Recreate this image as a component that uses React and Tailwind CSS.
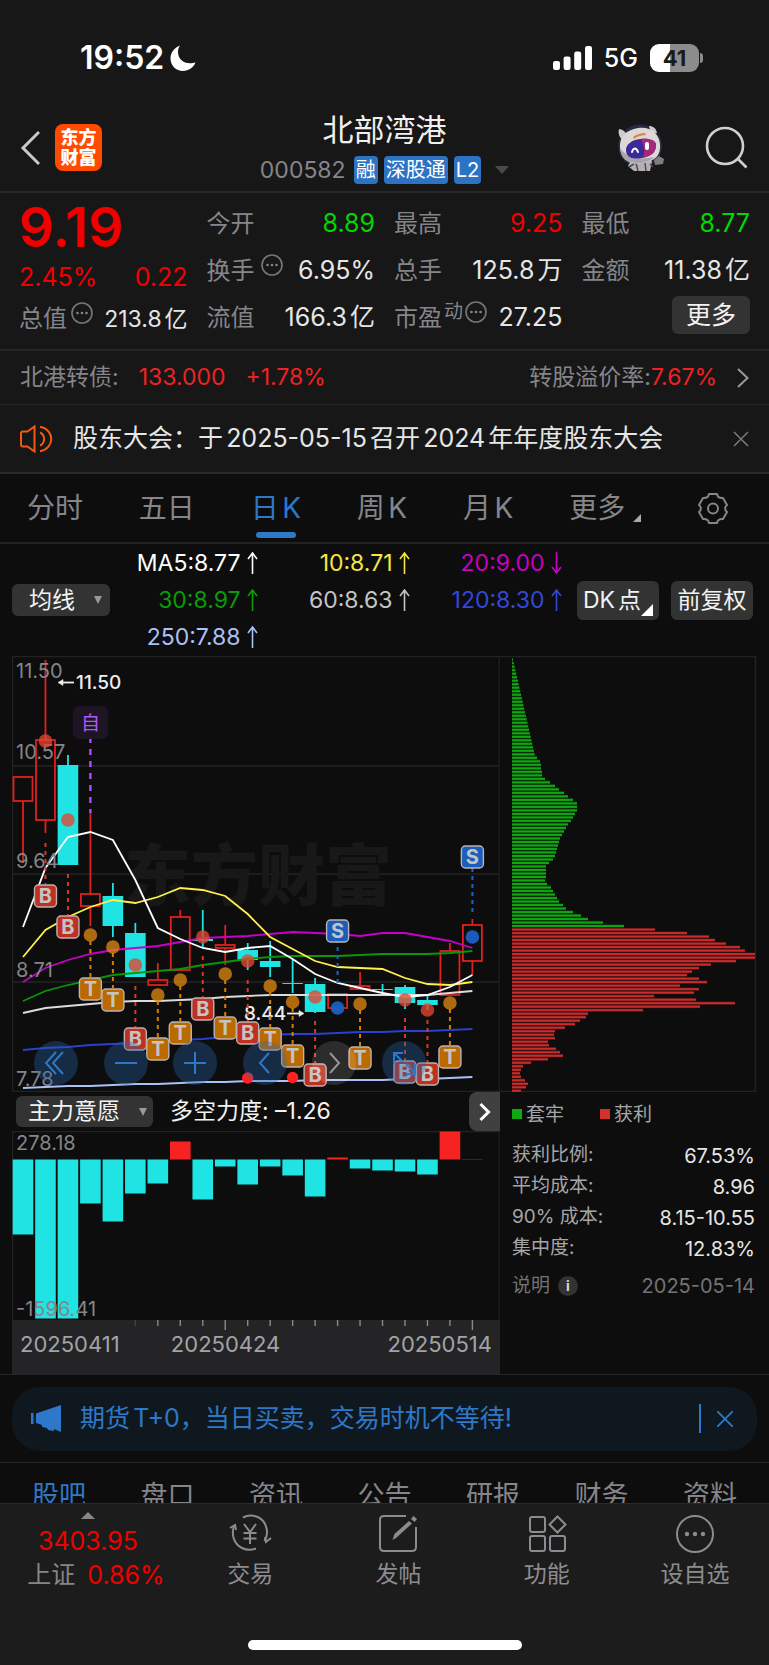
import React, { useState } from 'react'

const STEP = 22.47
const cx = (i) => 23 + STEP * i

const RED = '#e01f1f'
const CYAN = '#20e3e3'

// [high, top, bottom, low, type]
const candles = [
  [777, 777, 801, 863, 'up'],
  [660, 740, 820, 833, 'up'],
  [755, 765, 865, 865, 'down'],
  [813, 894, 906, 926, 'up'],
  [883, 896, 926, 937, 'down'],
  [923, 933, 977, 977, 'down'],
  [963, 980, 985, 985, 'up'],
  [910, 917, 970, 970, 'up'],
  [910, 939, 941, 947, 'down'],
  [925, 945, 948, 965, 'up'],
  [943, 950, 960, 970, 'down'],
  [941, 961, 967, 977, 'down'],
  [959, 983, 984, 993, 'down'],
  [978, 984, 1012, 1013, 'down'],
  [994, 994, 1008, 1012, 'up'],
  [972, 986, 989, 989, 'up'],
  [984, 989, 990, 995, 'down'],
  [985, 987, 1003, 1009, 'down'],
  [996, 1000, 1005, 1010, 'down'],
  [943, 951, 995, 995, 'up'],
  [919, 925, 961, 975, 'up'],
]

const maLines = [
  { color: '#dcdcdc', v: [1013, 1008, 1006, 1004, 1002, 1001, 1001, 1000, 999, 997, 996, 995, 995, 995, 995, 995, 995, 995, 995, 993, 991] },
  { color: '#2b3fd0', v: [1050, 1048, 1047, 1045, 1044, 1043, 1041, 1040, 1039, 1037, 1036, 1035, 1034, 1034, 1033, 1032, 1032, 1031, 1031, 1030, 1029] },
  { color: '#a9c1f7', v: [1088, 1087, 1086, 1086, 1085, 1084, 1084, 1083, 1082, 1082, 1081, 1081, 1081, 1080, 1080, 1080, 1080, 1079, 1079, 1078, 1077] },
  { color: '#0a950a', v: [1001, 991, 985, 980, 975, 973, 971, 969, 965, 962, 959, 957, 956, 956, 956, 955, 954, 954, 954, 953, 951] },
  { color: '#c800c8', v: [982, 968, 960, 954, 950, 948, 946, 942, 938, 937, 936, 934, 932, 933, 934, 936, 933, 933, 937, 941, 948] },
  { color: '#fff04a', v: [957, 930, 917, 907, 900, 903, 897, 888, 890, 896, 914, 937, 949, 961, 967, 968, 969, 978, 984, 985, 982] },
  { color: '#ffffff', v: [927, 868, 837, 832, 840, 880, 928, 939, 948, 952, 948, 946, 959, 974, 983, 988, 993, 997, 995, 987, 975] },
]

// trade marks: index, letter, dot y, badge y, dashed line start
const marks = [
  [1, 'B', 741, 896, 843],
  [2, 'B', 820, 927, 874],
  [3, 'T', 935, 989, 941],
  [4, 'T', 947, 1000, 953],
  [5, 'B', 965, 1039, 986],
  [6, 'T', 995, 1049, 1001],
  [7, 'T', 980, 1033, 986],
  [8, 'B', 937, 1009, 956],
  [9, 'T', 974, 1028, 980],
  [10, 'B', 961, 1033, 980],
  [11, 'T', 986, 1039, 992],
  [12, 'T', 1002, 1056, 1008],
  [14, 'S', 1008, 931, 983],
  [15, 'T', 1004, 1058, 1010],
  [17, 'B', 1000, 1072, 1018],
  [18, 'B', 1010, 1074, 1020],
  [13, 'B', 997, 1075, 1021],
  [19, 'T', 1003, 1057, 1009],
  [20, 'S', 937, 857, 912],
]
const markColors = {
  B: { badge: '#bf3022', dot: '#e2452f', line: '#d23a2a' },
  T: { badge: '#bb6a00', dot: '#dd8511', line: '#d87f0a' },
  S: { badge: '#1a5dbd', dot: '#1c5fc4', line: '#1d64cc' },
}

const greenBars = [
  ...Array.from({ length: 28 }, (_, i) => 1 + i * 0.8),
  25, 28, 29, 29, 30, 30, 33, 38, 43, 47, 52, 56, 61, 65, 65, 65, 63, 61, 59, 56, 54, 52, 50, 48,
  47, 46, 45, 44, 43, 41, 37, 34, 34, 34, 34, 33, 35, 39, 41, 43, 45, 47, 51, 54, 61, 69, 76, 91, 112,
]
const redBars = [
  143, 175, 197, 203, 214, 228, 233, 243, 243, 224, 199, 187, 180, 175, 187, 195, 168, 187, 182, 142,
  184, 223, 188, 131, 76, 74, 68, 63, 53, 43, 42, 43, 36, 37, 44, 48, 51, 36, 19, 11, 9, 8, 9, 13, 16, 14, 9,
]

const forceBars = [75, 159, 159, 44, 62, 34, 24, -18, 40, 7, 25, 7, 16, 37, -2, 9, 11, 12, 15, -28, 0]

const maValues = [
  ['MA5:8.77', 'up', 'text-white'],
  ['10:8.71', 'up', 'text-[#f5e642]'],
  ['20:9.00', 'down', 'text-[#c800c0]'],
  ['30:8.97', 'up', 'text-[#0a9a0a]'],
  ['60:8.63', 'up', 'text-[#c4c4c4]'],
  ['120:8.30', 'up', 'text-[#3348d8]'],
  ['250:7.88', 'up', 'text-[#a9c1f7]'],
]

const costRows = [
  ['获利比例:', '67.53%'],
  ['平均成本:', '8.96'],
  ['90% 成本:', '8.15-10.55'],
  ['集中度:', '12.83%'],
]

function DotsIcon() {
  return (
    <svg className="w-[22px] h-[22px] shrink-0" viewBox="0 0 22 22" fill="none">
      <circle cx="11" cy="11" r="10" stroke="#77777b" strokeWidth="1.6" />
      <circle cx="6.5" cy="11" r="1.3" fill="#85858a" />
      <circle cx="11" cy="11" r="1.3" fill="#85858a" />
      <circle cx="15.5" cy="11" r="1.3" fill="#85858a" />
    </svg>
  )
}

function MaArrow({ dir }) {
  return (
    <svg className="w-[11px] h-[22px]" viewBox="0 0 11 22" fill="none" stroke="currentColor" strokeWidth="1.6">
      {dir === 'up' ? <path d="M5.5 22V1M1 7l4.5-6L10 7" /> : <path d="M5.5 0v21M1 15l4.5 6 4.5-6" />}
    </svg>
  )
}

function StatusBar() {
  return (
    <div className="h-[116px] pl-20 pr-[66px] flex items-center justify-between text-white">
      <div className="flex items-center gap-1.5">
        <span className="text-[32px] font-semibold leading-none">19:52</span>
        <svg className="w-[26px] h-[26px]" viewBox="0 0 26 26" fill="#fff">
          <path d="M10 0.500C4.500 2.500 0.500 7.500 0.500 13.500C0.500 20.500 6 26 13 26C18.800 26 23.700 22.600 25.500 17.300C24 18 22 18.300 20 18.300C13 18.300 8 13.500 8 7C8 4.500 8.700 2.300 10 0.500Z" />
        </svg>
      </div>
      <div className="flex items-center gap-3">
        <svg className="w-[39px] h-[24px]" viewBox="0 0 39 24" fill="#fff">
          <rect x="0" y="15" width="7" height="9" rx="2.200" />
          <rect x="10.600" y="10.500" width="7" height="13.500" rx="2.200" />
          <rect x="21.200" y="5.500" width="7" height="18.500" rx="2.200" />
          <rect x="32" y="0" width="7" height="24" rx="2.200" />
        </svg>
        <span className="text-[25px] leading-none font-medium">5G</span>
        <div className="flex items-center gap-px">
          <div className="w-[49px] h-[28px] rounded-[9px] bg-linear-to-r from-white from-41% to-[#8c8c8c] to-41% flex items-center justify-center">
            <span className="text-[22px] font-bold leading-none text-[#1a1a1a]">41</span>
          </div>
          <div className="w-[3px] h-2.5 rounded-r-full bg-[#8c8c8c]" />
        </div>
      </div>
    </div>
  )
}

function Robot() {
  return (
    <svg className="w-[48px] h-[48px]" viewBox="0 0 48 48">
      <ellipse cx="23" cy="22" rx="22" ry="21.500" fill="#252c42" />
      <path d="M2 5c3 0 6 2 8 6l-5 4c-3-2-4-6-3-10zM32 2c4 0 7 2 8 7l-6 1z" fill="#cfcaca" />
      <path d="M14 36l-3 6 6 5h16l2-10-8-4z" fill="#b5b1b3" />
      <path d="M19 39l2 8M28 39l1 8M12 43l5-3M33 40l3 3" stroke="#4f4b52" strokeWidth="1.500" fill="none" />
      <path d="M3 24C2 13 9 6 21 4s21 5 22 16-4 17-18 19S4 35 3 24z" fill="#ddd7d6" />
      <path d="M3 24c1 10 7 15 18 15 7 0 12-2 16-6-12 3-27 2-34-9z" fill="#a9a4a9" />
      <path d="M16 13c4-3 8-4 12-4l1 2c-4 0-8 1-12 4z" fill="#d98450" />
      <path d="M9 26c0-6 6-10 14-11s16 1 16 6-2 11-14 13S9 32 9 26z" fill="#3b2a9a" />
      <path d="M24 15c8-1 15 1 15 6s-2 11-14 13c4-5 2-11-1-19z" fill="#a32a78" />
      <path d="M15 28c1-4 4-5 6 0" stroke="#fff" strokeWidth="2" fill="none" strokeLinecap="round" />
      <path d="M30 20v4" stroke="#fff" strokeWidth="4" strokeLinecap="round" />
      <path d="M37 36l5-4 5 3-1 5-8 1z" fill="#807d82" />
    </svg>
  )
}

function Header() {
  return (
    <header className="h-[77px] border-b-2 border-[#262626] px-5 pb-3 flex items-center justify-between">
      <div className="flex-1 flex items-center gap-[15px]">
        <button aria-label="返回">
          <svg className="w-5 h-9" viewBox="0 0 20 36" fill="none" stroke="#c9c9c9" strokeWidth="3">
            <path d="M19 2L3 18l16 16" />
          </svg>
        </button>
        <div className="w-[47px] h-[47px] rounded-lg bg-[#ff4a00] text-white text-[18px] leading-5 font-black flex flex-col items-center justify-center">
          <span>东方</span>
          <span>财富</span>
        </div>
      </div>
      <div className="flex flex-col items-center">
        <h1 className="text-[31px] leading-9 text-[#f0f0f0]">北部湾港</h1>
        <div className="flex items-center gap-1.5 mt-2 text-xl leading-7 text-white">
          <span className="text-[23px] text-[#85858a] mr-0.5">000582</span>
          <span className="bg-[#2d73c4] rounded px-0.5">融</span>
          <span className="bg-[#2d73c4] rounded px-0.5">深股通</span>
          <span className="bg-[#2d73c4] rounded px-0.5">L2</span>
          <span className="ml-2 border-x-[7px] border-x-transparent border-t-8 border-t-[#4a4a4a]" />
        </div>
      </div>
      <div className="flex-1 flex items-center justify-end gap-10">
        <Robot />
        <button aria-label="搜索">
          <svg className="w-[44px] h-[44px]" viewBox="0 0 44 44" fill="none" stroke="#d0d0d0" strokeWidth="2.600">
            <circle cx="20" cy="20" r="18" />
            <path d="M32.500 32.500l9 9" />
          </svg>
        </button>
      </div>
    </header>
  )
}

function Cell({ label, extra, value, color = 'text-[#e6e6e6]' }) {
  return (
    <div className="h-[47px] flex items-center justify-between">
      <div className="flex items-center text-2xl leading-none text-[#85858a]">
        <span>{label}</span>
        {extra}
      </div>
      <span className={color}>{value}</span>
    </div>
  )
}

function Quote() {
  return (
    <section className="h-[158px] border-b-2 border-[#262626] pt-[7px] px-[19px] grid grid-cols-4 gap-x-[19px] text-[25px] leading-none whitespace-nowrap [text-autospace:normal]">
      <div>
        <div className="h-[54px] flex items-center text-[55px] font-semibold text-[#f00000]">9.19</div>
        <div className="h-[47px] flex items-center justify-between text-[#f00000]">
          <span>2.45%</span>
          <span>0.22</span>
        </div>
        <div className="h-9 flex items-center justify-between">
          <div className="flex items-center gap-1 text-2xl leading-none text-[#85858a]">
            <span>总值</span>
            <div className="pb-3"><DotsIcon /></div>
          </div>
          <span className="text-[23px] text-[#e6e6e6]">213.8亿</span>
        </div>
      </div>
      <div>
        <Cell label="今开" value="8.89" color="text-[#00d900]" />
        <Cell label="换手" value="6.95%" extra={<div className="pb-3 pl-1.5"><DotsIcon /></div>} />
        <Cell label="流值" value="166.3亿" />
      </div>
      <div>
        <Cell label="最高" value="9.25" color="text-[#f00000]" />
        <Cell label="总手" value="125.8万" />
        <Cell
          label="市盈"
          value="27.25"
          extra={
            <div className="flex items-center gap-0.5 pb-3 pl-0.5">
              <span className="text-[19px]">动</span>
              <DotsIcon />
            </div>
          }
        />
      </div>
      <div>
        <Cell label="最低" value="8.77" color="text-[#00d900]" />
        <Cell label="金额" value="11.38亿" />
        <div className="h-[47px] pt-0.5 flex items-start justify-end">
          <button className="h-[38px] px-3.5 rounded-md bg-[#333] text-[25px] leading-none text-[#f2f2f2]">更多</button>
        </div>
      </div>
    </section>
  )
}

function Bond() {
  return (
    <section className="h-[54px] border-b border-[#262626] px-5 flex items-center justify-between text-[23px]">
      <div className="flex items-center gap-5 text-[#ee2222]">
        <span className="text-[#85858a]">北港转债:</span>
        <span>133.000</span>
        <span>+1.78%</span>
      </div>
      <button className="flex items-center">
        <span className="text-[#85858a]">转股溢价率:</span>
        <span className="text-[#ee2222]">7.67%</span>
        <svg className="w-3 h-5 ml-5" viewBox="0 0 12 20" fill="none" stroke="#999" strokeWidth="2">
          <path d="M1 1l9.500 9L1 19" />
        </svg>
      </button>
    </section>
  )
}

function Notice() {
  return (
    <section className="h-[69px] border-b-2 border-[#2a2a2a] px-5 flex items-center">
      <svg className="w-[33px] h-[28px]" viewBox="0 0 33 28" fill="none" stroke="#f25a10" strokeWidth="2">
        <path d="M14.500 1.500v25l-7-5H3c-1.200 0-2-.800-2-2V8.500c0-1.200.800-2 2-2h4.500z" />
        <path d="M20 7.500c5.500 2.500 5.500 10.500 0 13" />
        <path d="M20 1.800c15 3 15 21.400 0 24.400" />
      </svg>
      <span className="ml-5 text-[25px] text-[#e6e6e6] [text-autospace:normal] whitespace-nowrap">股东大会：于2025-05-15召开2024年年度股东大会</span>
      <button aria-label="关闭" className="ml-auto">
        <svg className="w-4 h-4" viewBox="0 0 16 16" stroke="#7a7a7a" strokeWidth="1.500">
          <path d="M1 1l14 14M15 1L1 15" />
        </svg>
      </button>
    </section>
  )
}

function PeriodTabs() {
  const [active, setActive] = useState('日K')
  return (
    <nav className="h-[70px] border-b-2 border-[#222] pl-[27px] pr-10 flex items-center justify-between text-[28px] text-[#85858a]">
      {['分时', '五日', '日K', '周K', '月K', '更多'].map((t) => (
        <button
          key={t}
          onClick={() => setActive(t)}
          className={`relative h-full flex items-center [text-autospace:normal] ${active === t ? 'text-[#2d78c8]' : ''}`}
        >
          {t}
          {active === t && <span className="absolute bottom-1 left-1/2 -translate-x-1/2 w-10 h-1.5 rounded-full bg-[#2d78c8]" />}
          {t === '更多' && (
            <svg className="w-2 h-2 ml-2 mt-5" viewBox="0 0 8 8" fill="#aaa"><path d="M8 0v8H0z" /></svg>
          )}
        </button>
      ))}
      <button aria-label="设置">
        <svg className="w-8 h-8" viewBox="0 0 32 32" fill="none" stroke="#85858a" strokeWidth="2" strokeLinejoin="round">
          <path d="M12 2h8c.500 3 2.500 4.300 6 4l4 7c-2.500 2-2.500 5 0 7l-4 7c-3.500-.300-5.500 1-6 4h-8c-.500-3-2.500-4.300-6-4l-4-7c2.500-2 2.500-5 0-7l4-7c3.500.300 5.500-1 6-4z" />
          <circle cx="16" cy="16.500" r="5" />
        </svg>
      </button>
    </nav>
  )
}

function MaBar() {
  return (
    <section className="h-28 px-3 flex items-center justify-between text-[23px] leading-none whitespace-nowrap">
      <div className="relative w-[98px]">
        <select aria-label="均线" className="appearance-none w-full h-8 pl-[17px] rounded-md bg-[#333] leading-8 text-[#f2f2f2]">
          <option>均线</option>
        </select>
        <span className="absolute right-2 top-3 border-x-[4px] border-x-transparent border-t-8 border-t-[#999] pointer-events-none" />
      </div>
      <div className="grid grid-cols-[repeat(3,152px)] w-[456px] -ml-5">
        {maValues.map(([text, dir, color]) => (
          <div key={text} className={`h-[37px] flex items-center justify-end gap-1.5 ${color}`}>
            <span>{text}</span>
            <MaArrow dir={dir} />
          </div>
        ))}
      </div>
      <div className="flex gap-3 pr-1 text-[#f2f2f2]">
        <button className="relative w-[82px] h-[39px] pl-1.5 rounded-md bg-[#333] text-left [text-autospace:normal]">
          DK点
          <svg className="absolute right-1.5 bottom-1 w-3 h-3" viewBox="0 0 12 12" fill="#fff"><path d="M12 0v12H0z" /></svg>
        </button>
        <button className="w-[82px] h-[39px] rounded-md bg-[#333]">前复权</button>
      </div>
    </section>
  )
}

function KLineChart() {
  return (
    <svg className="block w-full" viewBox="12 656 488 436" fontFamily="Inter, 'Noto Sans CJK SC', sans-serif">
      <path d="M12 656.500h488M12 766h488M12 874h488M12 982h488M12 1091.500h488" stroke="#232323" strokeWidth="1.500" />
      <path d="M12.500 656v436" stroke="#232323" strokeWidth="1.500" />
      <path d="M499.500 656v436" stroke="#1c1c1c" strokeWidth="2" />
      <text x="124" y="900" fontSize="67" fontWeight="900" fill="#181818">东方财富</text>

      {candles.map(([high, top, bottom, low, type], i) => {
        const x = cx(i)
        return type === 'up' ? (
          <g key={i} stroke={RED} strokeWidth="1.800" fill="none">
            <path d={`M${x} ${high}V${top}M${x} ${bottom}V${low}`} />
            <rect x={x - 9.5} y={top} width="19" height={bottom - top} />
          </g>
        ) : (
          <g key={i} fill={CYAN}>
            <path d={`M${x} ${high}V${low}`} stroke={CYAN} strokeWidth="1.800" />
            <rect x={x - 10.3} y={top} width="20.600" height={bottom - top} />
          </g>
        )
      })}

      {maLines.map((line) => (
        <polyline
          key={line.color}
          points={line.v.map((y, i) => `${cx(i)},${y}`).join(' ')}
          fill="none"
          stroke={line.color}
          strokeWidth="1.800"
        />
      ))}

      <g fontSize="20" fill="#85858a">
        <text x="16" y="678">11.50</text>
        <text x="16" y="759">10.57</text>
        <text x="16" y="868">9.64</text>
        <text x="16" y="977">8.71</text>
        <text x="16" y="1086">7.78</text>
      </g>

      <path d="M90.400 739V813" stroke="#a94dff" strokeWidth="2.400" strokeDasharray="6 6" strokeDashoffset="2" />
      <rect x="73" y="706" width="35" height="33" rx="6" fill="#1d1424" />
      <text x="90.500" y="730" fontSize="19" fill="#b055ff" textAnchor="middle">自</text>

      <g fontSize="19" fontWeight="500" fill="#ededed" stroke="none">
        <text x="76" y="689">11.50</text>
        <text x="244" y="1020">8.44</text>
      </g>
      <g stroke="#ededed" strokeWidth="1.800" fill="#ededed">
        <path d="M62 682.500H74" />
        <path d="M58 682.500l5-3v6z" strokeWidth="0.500" />
        <path d="M287 1013.500H300" />
        <path d="M304 1013.500l-5-3v6z" strokeWidth="0.500" />
      </g>

      {marks.map(([i, letter, dotY, badgeY, lineY]) => {
        const x = cx(i)
        const c = markColors[letter]
        const end = letter === 'S' ? badgeY + 11 : badgeY - 12
        return (
          <g key={i}>
            <path d={`M${x} ${lineY}V${end}`} stroke={c.line} strokeWidth="2" strokeDasharray="4 4" />
            <circle cx={x} cy={dotY} r="6.800" fill={c.dot} fillOpacity={letter === 'S' ? 0.95 : 0.78} />
            <rect x={x - 11} y={badgeY - 11} width="22" height="22" rx="4" fill={c.badge} stroke="#bdb3b0" strokeWidth="1.400" />
            <text x={x} y={badgeY + 7} fontSize="20" fontWeight="700" fill="#c4c4c4" textAnchor="middle">{letter}</text>
          </g>
        )
      })}
      <circle cx="247.700" cy="1078" r="5.700" fill="#ff2222" />
      <circle cx="292.600" cy="1077.500" r="5.700" fill="#ff2222" />
    </svg>
  )
}

function ChartControls() {
  const controls = [
    ['向前翻页', <path key="p" d="M22 11L12 22l10 11M29 11L19 22l10 11" />],
    ['缩小', <path key="p" d="M11 22h22" />],
    ['放大', <path key="p" d="M11 22h22M22 11v22" />],
    ['左移', <path key="p" d="M26 12L17 22l9 10" />],
    ['右移', <path key="p" d="M18 12l9 10-9 10" />],
    ['全屏', <path key="p" d="M12 22V12h9M12 12l9 9M24 23l9 9M33 23v10h-9" />],
  ]
  return (
    <div className="absolute left-[22px] right-[74px] bottom-[7px] flex justify-between">
      {controls.map(([label, icon]) => (
        <button
          key={label}
          aria-label={label}
          className={`w-11 h-11 rounded-full ${label === '右移' ? 'bg-white/13' : 'bg-[#2766ae]/35'}`}
        >
          <svg viewBox="0 0 44 44" fill="none" stroke={label === '右移' ? '#97979b' : '#2d78c8'} strokeWidth="2">
            {icon}
          </svg>
        </button>
      ))}
    </div>
  )
}

function CostChart() {
  return (
    <svg className="block w-full" viewBox="500 656 257 436">
      <path d="M500 656.500h256M755.500 656v436M500 1091.500h256" stroke="#232323" strokeWidth="1.500" fill="none" />
      {[...greenBars, ...redBars].map((w, i) => (
        <g key={i} fill={i < greenBars.length ? '#10a810' : '#cc2c2c'}>
          <rect x="512" y={658.7 + i * 3.505} width={w} height="2" />
          <rect x="512" y={658 + i * 3.505} width={w} height="3.200" opacity="0.300" />
        </g>
      ))}
    </svg>
  )
}

function ForceChart() {
  return (
    <svg className="block w-full" viewBox="12 1131 488 189" fontFamily="Inter, sans-serif">
      <path d="M12 1131.500h488M12.500 1131v189" stroke="#232323" strokeWidth="1.500" />
      <path d="M499.500 1131v189" stroke="#1c1c1c" strokeWidth="2" />
      {forceBars.map((v, i) => (
        <rect
          key={i}
          x={cx(i) - 10.3}
          y={v < 0 ? 1159.5 + v : 1159.5}
          width="20.600"
          height={Math.abs(v) || 0.2}
          fill={v < 0 ? '#f72323' : CYAN}
        />
      ))}
      <g fontSize="20" fill="#85858a">
        <text x="16" y="1150">278.18</text>
        <text x="16" y="1316">-1596.41</text>
      </g>
    </svg>
  )
}

function DateAxis() {
  return (
    <div className="h-[54px] bg-[#242426]">
      <svg className="block w-full" viewBox="12 0 488 10" stroke="#8a8a8a" strokeWidth="1.400">
        {Array.from({ length: 16 }, (_, k) => k + 5).map((i) => (
          <path key={i} d={`M${cx(i)} 0V${i === 9 || i === 20 ? 10 : 6}`} opacity={i === 5 ? 0.3 : 1} />
        ))}
      </svg>
      <div className="px-2 flex justify-between text-[22px] leading-7 text-[#a3a3a6]">
        <span>20250411</span>
        <span className="pr-14">20250424</span>
        <span>20250514</span>
      </div>
    </div>
  )
}

function Charts() {
  return (
    <section className="px-3 grid grid-cols-[488fr_257fr] border-b border-[#262626]">
      <div>
        <div className="relative">
          <KLineChart />
          <ChartControls />
        </div>
        <div className="h-[39px] flex items-center text-[23px] leading-none">
          <div className="relative ml-1 w-[137px]">
            <select aria-label="指标" className="appearance-none w-full h-[31px] pl-3 rounded-md bg-[#333] text-[#f2f2f2]">
              <option>主力意愿</option>
            </select>
            <span className="absolute right-1.5 top-3 border-x-[4px] border-x-transparent border-t-8 border-t-[#999] pointer-events-none" />
          </div>
          <span className="ml-[17px] text-[#f2f2f2]">多空力度: –1.26</span>
          <button aria-label="下一个指标" className="ml-auto w-[31px] h-full rounded-l-lg bg-[#404040] flex items-center justify-center">
            <svg className="w-3 h-5" viewBox="0 0 12 20" fill="none" stroke="#fff" strokeWidth="3">
              <path d="M1.500 2l8 8-8 8" />
            </svg>
          </button>
        </div>
        <ForceChart />
        <DateAxis />
      </div>
      <div>
        <CostChart />
        <div className="pl-3 pr-0.5 text-[19px] text-[#a6a6a8]">
          <div className="h-11 flex items-center gap-9 leading-none">
            <span className="flex items-center gap-1"><i className="w-2.5 h-2.5 bg-[#10a810]" />套牢</span>
            <span className="flex items-center gap-1"><i className="w-2.5 h-2.5 bg-[#d43030]" />获利</span>
          </div>
          <dl className="pt-1">
            {costRows.map(([label, value]) => (
              <div key={label} className="h-[31px] flex items-center justify-between">
                <dt>{label}</dt>
                <dd className="text-xl text-[#e6e6e6]">{value}</dd>
              </div>
            ))}
          </dl>
          <div className="h-10 mt-0.5 flex items-center text-[#737375]">
            <span>说明</span>
            <span className="ml-2 w-5 h-5 rounded-full bg-[#333] text-[#d9d9d9] text-sm leading-5 font-bold text-center">i</span>
            <span className="ml-auto text-xl">2025-05-14</span>
          </div>
        </div>
      </div>
    </section>
  )
}

function Banner() {
  return (
    <section className="h-[88px] border-b border-[#262626] px-3 flex items-center">
      <div className="w-full h-16 rounded-[28px] bg-[#10181f] pl-[19px] pr-6 flex items-center text-[25px] text-[#2d78c8]">
        <svg className="w-[31px] h-[27px]" viewBox="0 0 31 27" fill="#2d78c8">
          <path d="M0 8h2.500v11H0zM5 8.500L30 0v27l-7-3v2l-6-1-1-2-5-1v-2l-6-2z" />
        </svg>
        <span className="ml-[18px] [text-autospace:normal]">期货T+0，当日买卖，交易时机不等待!</span>
        <button aria-label="关闭" className="ml-auto pl-4 border-l-2 border-[#2d78c8] h-[29px] flex items-center">
          <svg className="w-4 h-4" viewBox="0 0 16 16" stroke="#2d78c8" strokeWidth="1.800">
            <path d="M0 0l16 16M16 0L0 16" />
          </svg>
        </button>
      </div>
    </section>
  )
}

function InfoTabs() {
  return (
    <nav className="h-10 overflow-hidden px-8 pt-[13px] flex justify-between text-[27px] leading-10 text-[#85858a]">
      {['股吧', '盘口', '资讯', '公告', '研报', '财务', '资料'].map((t, i) => (
        <button key={t} className={`h-10 ${i === 0 ? 'text-[#2d78c8]' : ''}`}>{t}</button>
      ))}
    </nav>
  )
}

const navItems = [
  ['交易', (
    <>
      <path d="M13 3.500C21 -0.500 31 2 35 10c3 6 2.500 12-.5 17M4 12c-3 9 0 18 8 22 4 2 9 2.500 14 .500" />
      <path d="M0 14l5-3 1 5M41 24l-5 4-1-5" />
      <path d="M14 10l6 8 6-8M20 18v12M13.500 19h13M13.500 24.500h13" />
    </>
  )],
  ['发帖', (
    <>
      <path d="M28 2H6C3.500 2 2 3.500 2 6v27c0 2.500 1.500 4 4 4h28c2.500 0 4-1.500 4-4V13" />
      <path d="M14.500 26l2-6L31 7l3 2.500L18 24z" fill="#8c8c90" stroke="none" />
      <path d="M33 5l2.500-3L39 5l-2.500 3z" fill="#8c8c90" stroke="none" />
    </>
  )],
  ['功能', (
    <>
      <rect x="3" y="3" width="15" height="15" rx="2" />
      <path d="M30.500 2.500l8 8-8 8-8-8z" />
      <rect x="3" y="22" width="15" height="15" rx="2" />
      <rect x="23" y="22" width="15" height="15" rx="2" />
    </>
  )],
  ['设自选', (
    <>
      <circle cx="20" cy="20" r="18" />
      <circle cx="12" cy="20" r="2.200" fill="#8c8c90" stroke="none" />
      <circle cx="20" cy="20" r="2.200" fill="#8c8c90" stroke="none" />
      <circle cx="28" cy="20" r="2.200" fill="#8c8c90" stroke="none" />
    </>
  )],
]

function BottomBar() {
  return (
    <footer className="bg-[#1c1c1c] border-t border-[#2a2a2a]">
      <div className="h-[136px] flex">
        <button className="w-[176px] pt-2 flex flex-col items-center text-[25px] leading-none text-[#f00000]">
          <span className="border-x-[7px] border-x-transparent border-b-[7px] border-b-[#85858a]" />
          <span className="h-10 mt-0.5 flex items-center">3403.95</span>
          <span className="h-7 flex items-center gap-3 pl-4">
            <span className="text-2xl leading-none text-[#85858a]">上证</span>0.86%
          </span>
        </button>
        <div className="flex-1 grid grid-cols-4 text-[23px] leading-none text-[#8c8c90]">
          {navItems.map(([label, icon]) => (
            <button key={label} className="pt-2.5 flex flex-col items-center">
              <svg className="w-10 h-10 overflow-visible" viewBox="0 0 40 40" fill="none" stroke="#8c8c90" strokeWidth="2">
                {icon}
              </svg>
              <span className="mt-1.5 h-7 flex items-center">{label}</span>
            </button>
          ))}
        </div>
      </div>
      <div className="h-[25px] flex justify-center">
        <div className="w-[274px] h-2.5 rounded-full bg-white" />
      </div>
    </footer>
  )
}

export default function App() {
  return (
    <div className="bg-[#0d0d0d] font-[Inter,'Noto_Sans_CJK_SC',sans-serif] overflow-hidden">
      <div className="bg-[#171717]">
        <StatusBar />
        <Header />
        <Quote />
        <Bond />
        <Notice />
      </div>
      <PeriodTabs />
      <MaBar />
      <Charts />
      <Banner />
      <InfoTabs />
      <BottomBar />
    </div>
  )
}
